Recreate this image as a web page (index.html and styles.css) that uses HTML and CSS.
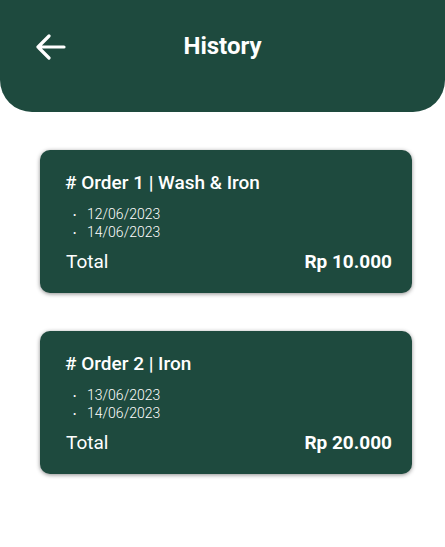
FILE: index.html
```html
<!DOCTYPE html>
<html>
<head>
<meta charset="utf-8">
<link rel="stylesheet" href="styles.css">
</head>
<body>
<header class="topbar">
  <svg class="back" width="30" height="26" viewBox="0 0 30 26" fill="none" stroke="#fff" stroke-width="3.2" stroke-linecap="round" stroke-linejoin="round">
    <path d="M2 13H28M13 2L2 13L13 24"/>
  </svg>
  <h1 class="title">History</h1>
</header>
<main class="list">
  <section class="card">
    <h2 class="card-title"># Order 1 | Wash &amp; Iron</h2>
    <ul class="dates">
      <li>12/06/2023</li>
      <li>14/06/2023</li>
    </ul>
    <div class="total"><span class="label">Total</span><span class="amount">Rp 10.000</span></div>
  </section>
  <section class="card">
    <h2 class="card-title"># Order 2 | Iron</h2>
    <ul class="dates">
      <li>13/06/2023</li>
      <li>14/06/2023</li>
    </ul>
    <div class="total"><span class="label">Total</span><span class="amount">Rp 20.000</span></div>
  </section>
</main>
</body>
</html>
```
FILE: styles.css
```css
* { box-sizing: border-box; }
html, body { margin: 0; padding: 0; background: #fff; }
body { font-family: Roboto, "Liberation Sans", sans-serif; color: #fff; width: 445px; height: 547px; overflow: hidden; }
.topbar {
  position: relative;
  height: 112px;
  background: #1e4a3e;
  border-radius: 0 0 32px 32px;
  display: flex;
  justify-content: center;
  padding-top: 32px;
}
.back { position: absolute; left: 36px; top: 34px; }
.title { margin: 0; font-size: 24px; font-weight: 700; line-height: 29px; }
.list { display: flex; flex-direction: column; gap: 38px; padding: 38px 33px 0 40px; }
.card {
  background: #1e4a3e;
  border-radius: 10px;
  box-shadow: 0 1px 4px rgba(0,0,0,0.45);
  height: 143px;
  padding: 22px 20px 0 25px;
}
.card-title { margin: 0; font-size: 19px; font-weight: 500; line-height: 22px; }
.dates { list-style: none; margin: 12px 0 0; padding: 0 0 0 8px; font-size: 14px; font-weight: 300; line-height: 17px; }
.dates li::before { content: "•"; display: inline-block; width: 14px; font-size: 10px; }
.total { display: flex; justify-content: space-between; margin-top: 9px; font-size: 19px; line-height: 22px; font-weight: 400; }
.label { padding-left: 1px; }
.amount { font-weight: 700; }
```
